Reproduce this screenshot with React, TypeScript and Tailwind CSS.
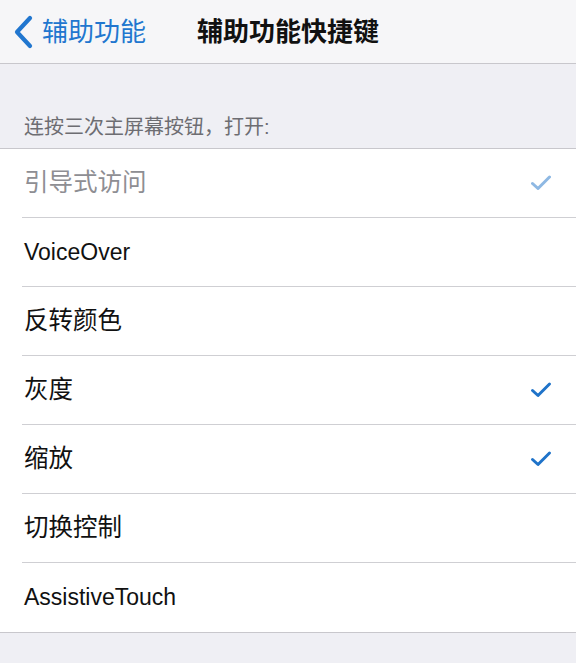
import React from "react";

const rows: { label: string; checked: boolean; disabled?: boolean; latin?: boolean }[] = [
  { label: "引导式访问", checked: true, disabled: true },
  { label: "VoiceOver", checked: false, latin: true },
  { label: "反转颜色", checked: false },
  { label: "灰度", checked: true },
  { label: "缩放", checked: true },
  { label: "切换控制", checked: false },
  { label: "AssistiveTouch", checked: false, latin: true },
];

const font = {
  fontFamily: '"Liberation Sans", "Noto Sans CJK SC", sans-serif',
};

function Check({ faded }: { faded?: boolean }) {
  return (
    <svg width="22" height="18" viewBox="0 0 22 18" className={faded ? "opacity-50" : ""}>
      <path
        d="M2.5 9.5 L8 14.5 L19.5 3"
        fill="none"
        stroke="#1f73c9"
        strokeWidth="3"
        strokeLinecap="round"
        strokeLinejoin="round"
      />
    </svg>
  );
}

export default function App() {
  return (
    <div className="w-[576px] h-[663px] bg-[#efeff4] overflow-hidden" style={font}>
      {/* navigation bar */}
      <div className="relative h-[64px] bg-[#f6f6f8] border-b border-[#c8c7cc] flex items-center">
        <div className="flex items-center pl-[12px] text-[#2176cf]">
          <svg width="22" height="34" viewBox="0 0 22 34">
            <path
              d="M18 3 L5 17 L18 31"
              fill="none"
              stroke="#2176cf"
              strokeWidth="4.2"
              strokeLinecap="round"
              strokeLinejoin="round"
            />
          </svg>
          <span className="ml-[8px] text-[26px] leading-none">辅助功能</span>
        </div>
        <div className="absolute inset-0 flex items-center justify-center pointer-events-none">
          <span className="text-[26px] font-bold text-[#111] leading-none">辅助功能快捷键</span>
        </div>
      </div>

      {/* section header */}
      <div className="h-[84px] flex items-end pl-[24px] pb-[11px]">
        <span className="text-[20px] text-[#6d6d72] leading-none">连按三次主屏幕按钮，打开:</span>
      </div>

      {/* options list */}
      <div className="bg-white border-y border-[#c8c7cc]">
        {rows.map((r, i) => (
          <div key={r.label} className="pl-[22px]">
            <div
              className={
                "h-[69px] flex items-center justify-between pr-[24px] " +
                (i < rows.length - 1 ? "border-b border-[#cfcfd3]" : "h-[68px]")
              }
            >
              <span
                className={
                  "leading-none pl-[2px] " +
                  (r.latin ? "text-[23px] " : "text-[24.5px] ") +
                  (r.disabled ? "text-[#8e8e93]" : "text-[#111]")
                }
              >
                {r.label}
              </span>
              {r.checked && <Check faded={r.disabled} />}
            </div>
          </div>
        ))}
      </div>
    </div>
  );
}
